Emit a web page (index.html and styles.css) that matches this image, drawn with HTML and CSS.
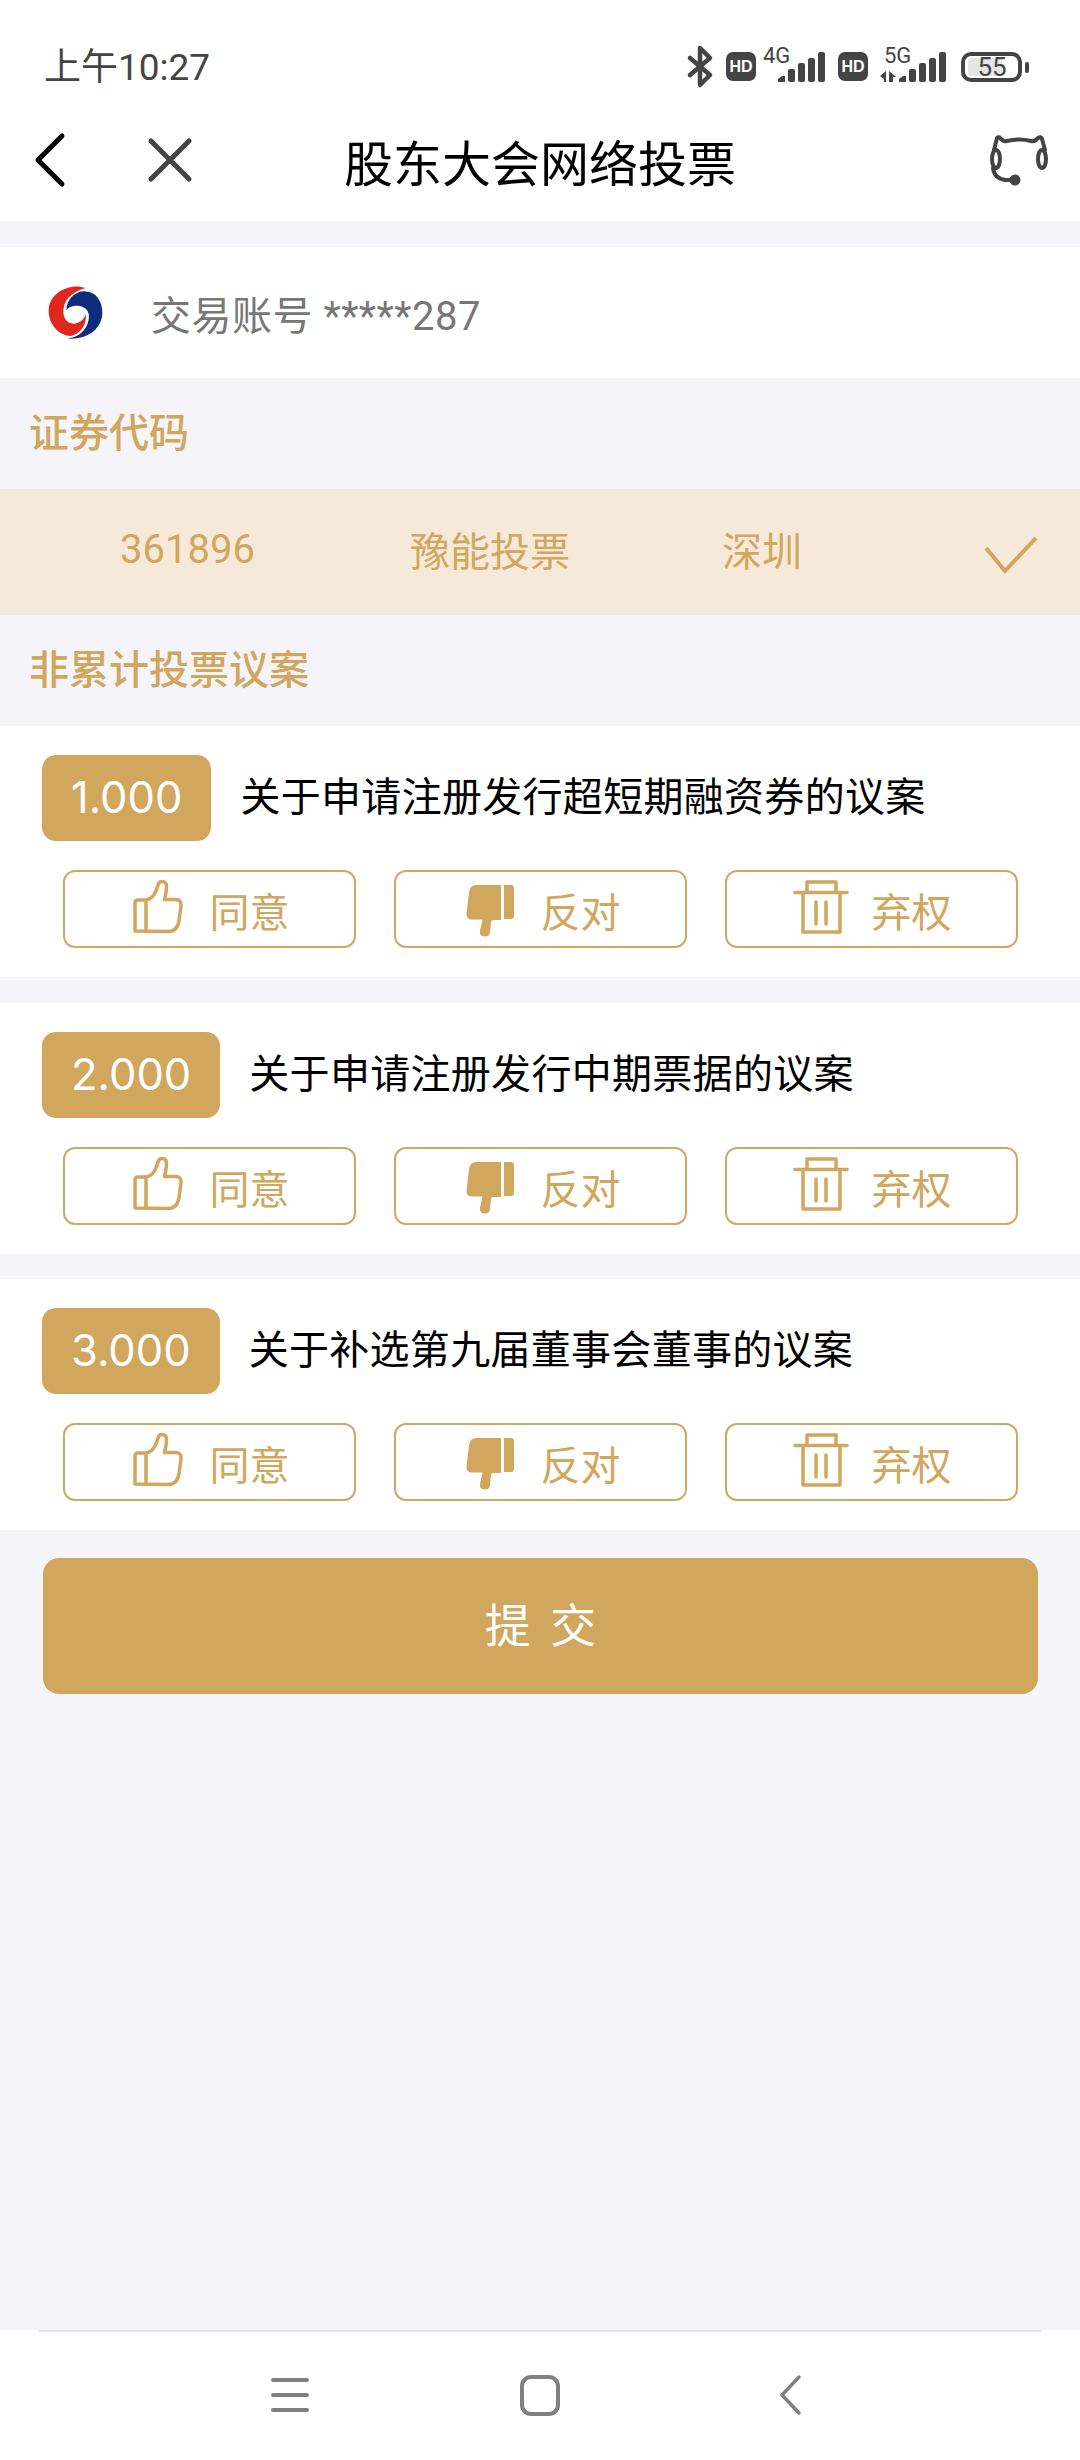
FILE: index.html
```html
<!DOCTYPE html>
<html lang="zh-CN">
<head>
  <meta charset="UTF-8">
  <meta name="viewport" content="width=device-width, initial-scale=1.0">
  <title>股东大会网络投票</title>
  <link rel="stylesheet" href="styles.css">
</head>
<body>
  <svg class="defs" width="0" height="0">
    <symbol id="agree" viewBox="10 10 60 60">
      <path d="M15 62V34q0-3 3-3h8q6-1 9-7 2-4 3-8 1-4 4.500-3.500 4 .5 4 5 0 5-2 13h11q6 0 5.500 6l-2 15q-1.500 11-11 11z" fill="none" stroke="#d1a65d" stroke-width="3.500" stroke-linejoin="round"/>
      <path d="M26 31v31" fill="none" stroke="#d1a65d" stroke-width="3.500"/>
    </symbol>
    <symbol id="against" viewBox="5 10 60 60">
      <path d="M20 16h25v35h-8q-1.500 0-2 2l-1 10q-.5 4.500-5 4.500-6 0-5-6l2.500-11H16q-6 0-5.500-6l2.500-21q1-7.500 7-7.500z" fill="#d1a65d"/>
      <path d="M48 16h7q3 0 3 3v28q0 3-3 3h-7z" fill="#d1a65d"/>
    </symbol>
    <symbol id="abstain" viewBox="12 10 60 60">
      <g fill="none" stroke="#d1a65d" stroke-width="3.500" stroke-linecap="round" stroke-linejoin="round">
        <path d="M15 23.500h52"/>
        <path d="M27 23V13h29v10"/>
        <path d="M23 24v39h37V24"/>
        <path d="M36 33v22M46 33v22"/>
      </g>
    </symbol>
  </svg>

  <div class="top">
    <div class="status">
      <span class="time">上午10:27</span>
      <svg class="status-icons" width="355" height="48" viewBox="0 0 355 48">
        <path d="M10 14l20 17-10 10V4l10 10-20 17" fill="none" stroke="#444" stroke-width="4.500" stroke-linejoin="round" stroke-linecap="round"/>
        <rect x="46" y="8" width="30" height="29" rx="7" fill="#444"/>
        <text x="61" y="28" class="hd">HD</text>
        <text x="83" y="19" class="net">4G</text>
        <g fill="#444">
          <path d="M98 38v-3l4-3h3v6z"/>
          <rect x="108" y="25" width="7" height="13" rx="2"/>
          <rect x="118" y="19" width="7" height="19" rx="2"/>
          <rect x="128" y="14" width="7" height="24" rx="2"/>
          <rect x="138" y="8" width="7" height="30" rx="2"/>
        </g>
        <rect x="158" y="8" width="30" height="29" rx="7" fill="#444"/>
        <text x="173" y="28" class="hd">HD</text>
        <text x="204" y="19" class="net">5G</text>
        <g fill="#444">
          <path d="M200 32l6-5v11h-2v-3zM209 27l7 6h-3v5h-4z"/>
          <path d="M219 38v-3l4-3h3v6z"/>
          <rect x="229" y="25" width="7" height="13" rx="2"/>
          <rect x="239" y="19" width="7" height="19" rx="2"/>
          <rect x="249" y="14" width="7" height="24" rx="2"/>
          <rect x="259" y="8" width="7" height="30" rx="2"/>
        </g>
        <rect x="283" y="10" width="57" height="26" rx="8" fill="none" stroke="#444" stroke-width="4"/>
        <rect x="288" y="14" width="34" height="18" rx="3" fill="#e6e6e6"/>
        <text x="312" y="32" class="batt">55</text>
        <rect x="345" y="18" width="4" height="11" rx="2" fill="#444"/>
      </svg>
    </div>
    <div class="nav">
      <div class="nav-left">
        <svg width="40" height="60" viewBox="0 0 40 60"><path d="M32 6L8 30l24 24" fill="none" stroke="#000" stroke-width="5" stroke-linecap="round" stroke-linejoin="round"/></svg>
        <svg width="60" height="60" viewBox="0 0 60 60"><path d="M11 11l38 38M49 11L11 49" fill="none" stroke="#444" stroke-width="5" stroke-linecap="round"/></svg>
      </div>
      <h1>股东大会网络投票</h1>
      <div class="nav-right">
        <svg width="70" height="60" viewBox="0 0 70 60">
          <g fill="none" stroke="#444" stroke-width="4" stroke-linecap="round" stroke-linejoin="round">
            <path d="M9 20l3-12q2-2 4 1 3 3 6 2 12-3 24 0 4 1 7-3 3-2 4 1l3 11"/>
            <ellipse cx="11" cy="29" rx="4" ry="9"/>
            <ellipse cx="57" cy="29" rx="4" ry="9"/>
            <path d="M8 38q1 10 12 12h10"/>
          </g>
          <circle cx="30" cy="50" r="5.500" fill="#444"/>
        </svg>
      </div>
    </div>
  </div>

  <div class="account">
    <svg class="logo" width="57" height="57" viewBox="50 30 170 170">
      <path d="M165 42C120 25 55 55 55 110c0 45 35 75 65 75 30-5 50-35 45-65-5 20-25 30-40 28-20-3-30-23-25-48 5-30 35-50 65-58z" fill="#e1261f"/>
      <path d="M108 108c0-33 27-58 57-56 30 0 50 28 50 63 0 45-40 82-105 78 35-3 65-28 65-68 0-20-20-33-40-30-13 2-23 5-27 13z" fill="#0f2b7c"/>
    </svg>
    <span class="account-no">交易账号 *****287</span>
  </div>

  <div class="section-label">证券代码</div>
  <div class="stock">
    <span class="stock-code">361896</span>
    <span class="stock-name">豫能投票</span>
    <span class="stock-market">深圳</span>
    <svg class="check" width="60" height="50" viewBox="0 0 60 50"><path d="M5 14l19 23L55 4" fill="none" stroke="#d1a65d" stroke-width="4"/></svg>
  </div>

  <div class="section-label">非累计投票议案</div>

  <div class="card">
    <div class="motion">
      <span class="badge">1.000</span>
      <span class="motion-title">关于申请注册发行超短期融资券的议案</span>
    </div>
    <div class="actions">
      <div class="btn"><svg width="60" height="60"><use href="#agree"/></svg><span>同意</span></div>
      <div class="btn"><svg width="60" height="60"><use href="#against"/></svg><span>反对</span></div>
      <div class="btn"><svg width="60" height="60"><use href="#abstain"/></svg><span>弃权</span></div>
    </div>
  </div>

  <div class="card">
    <div class="motion">
      <span class="badge">2.000</span>
      <span class="motion-title">关于申请注册发行中期票据的议案</span>
    </div>
    <div class="actions">
      <div class="btn"><svg width="60" height="60"><use href="#agree"/></svg><span>同意</span></div>
      <div class="btn"><svg width="60" height="60"><use href="#against"/></svg><span>反对</span></div>
      <div class="btn"><svg width="60" height="60"><use href="#abstain"/></svg><span>弃权</span></div>
    </div>
  </div>

  <div class="card">
    <div class="motion">
      <span class="badge">3.000</span>
      <span class="motion-title">关于补选第九届董事会董事的议案</span>
    </div>
    <div class="actions">
      <div class="btn"><svg width="60" height="60"><use href="#agree"/></svg><span>同意</span></div>
      <div class="btn"><svg width="60" height="60"><use href="#against"/></svg><span>反对</span></div>
      <div class="btn"><svg width="60" height="60"><use href="#abstain"/></svg><span>弃权</span></div>
    </div>
  </div>

  <button class="submit" type="button">提 交</button>

  <div class="bottom">
    <div class="bottom-inner">
      <svg width="60" height="60" viewBox="0 0 60 60"><path d="M14 15h34M14 30h34M14 45h34" fill="none" stroke="#808080" stroke-width="4" stroke-linecap="round"/></svg>
      <svg width="60" height="60" viewBox="0 0 60 60"><rect x="12" y="12" width="36" height="37" rx="9" fill="none" stroke="#808080" stroke-width="4"/></svg>
      <svg width="60" height="60" viewBox="0 0 60 60"><path d="M38 12L21 30l17 18" fill="none" stroke="#808080" stroke-width="3.500" stroke-linecap="round" stroke-linejoin="round"/></svg>
    </div>
  </div>
</body>
</html>
```

FILE: styles.css
```css
* {
  box-sizing: border-box;
}
body {
  margin: 0;
  width: 1080px;
  height: 2460px;
  display: flex;
  flex-direction: column;
  background: #f4f4f9;
  font-family: Roboto, "Noto Sans CJK SC", sans-serif;
  font-size: 40px;
  overflow: hidden;
}
svg {
  display: block;
  flex: none;
}
.defs {
  position: absolute;
}
.top {
  background: white;
  height: 221px;
  margin-bottom: 26px;
}
.status {
  height: 100px;
  padding: 44px 0 0 44px;
  display: flex;
  justify-content: space-between;
}
.time {
  font-size: 37px;
  line-height: 48px;
  color: #444;
}
.status-icons {
  margin-right: 45px;
}
.hd {
  font: bold 16px "Liberation Sans", sans-serif;
  fill: white;
  text-anchor: middle;
}
.net {
  font: 22px Roboto, sans-serif;
  fill: #444;
}
.batt {
  font: 26px Roboto, sans-serif;
  fill: #444;
  text-anchor: middle;
}
.nav {
  height: 120px;
  display: grid;
  grid-template-columns: 1fr auto 1fr;
  align-items: center;
}
.nav-left {
  display: flex;
  gap: 70px;
  padding-left: 30px;
}
.nav-right {
  display: flex;
  justify-content: flex-end;
  padding-right: 25px;
}
.nav h1 {
  margin: 0;
  font-size: 49px;
  font-weight: 400;
  color: #000;
}
.account {
  background: white;
  height: 131px;
  display: flex;
  align-items: center;
  gap: 47px;
  padding-left: 47px;
  color: #777;
}
.account-no {
  letter-spacing: 0.5px;
}
.section-label {
  height: 111px;
  line-height: 111px;
  padding-left: 29px;
  color: #d1a65d;
  font-weight: 500;
}
.stock {
  background: #f6e9d9;
  height: 126px;
  display: flex;
  align-items: center;
  padding: 0 0 6px 120px;
  color: #d1a65d;
}
.stock-code {
  width: 290px;
}
.stock-name {
  width: 312px;
}
.stock-market {
  width: 259px;
}
.check {
  margin-top: 20px;
}
.card {
  background: white;
  height: 251px;
  margin-bottom: 25.5px;
  padding-top: 29px;
}
.motion {
  display: flex;
  align-items: center;
  gap: 29px;
  padding-left: 42px;
  height: 86px;
}
.badge {
  background: #d1a65d;
  color: white;
  font-family: Inter, sans-serif;
  font-size: 43.5px;
  font-weight: 400;
  height: 86px;
  line-height: 84px;
  padding: 0 29px;
  border-radius: 14px;
}
.motion-title {
  color: #000;
  letter-spacing: 0.3px;
  padding-bottom: 8px;
}
.actions {
  display: flex;
  gap: 38px;
  margin-top: 29px;
  padding-left: 63px;
}
.btn {
  width: 293px;
  height: 78px;
  border: 2px solid #cfa866;
  border-radius: 12px;
  display: flex;
  align-items: center;
  justify-content: center;
  gap: 20px;
  color: #d1a65d;
}
.btn span {
  padding-top: 2px;
}
.submit {
  display: block;
  margin: 2.5px 42px 0 43px;
  height: 136px;
  padding: 0 0 8px 4px;
  background: #d1a65d;
  color: white;
  border: none;
  border-radius: 16px;
  font-family: inherit;
  font-size: 46px;
  letter-spacing: 4px;
}
.bottom {
  margin-top: auto;
  background: white;
  height: 130px;
  padding: 0 39px;
}
.bottom-inner {
  height: 130px;
  padding-bottom: 2px;
  border-top: 2px solid #e5e5e5;
  display: flex;
  align-items: center;
  justify-content: center;
  gap: 191px;
}
```
